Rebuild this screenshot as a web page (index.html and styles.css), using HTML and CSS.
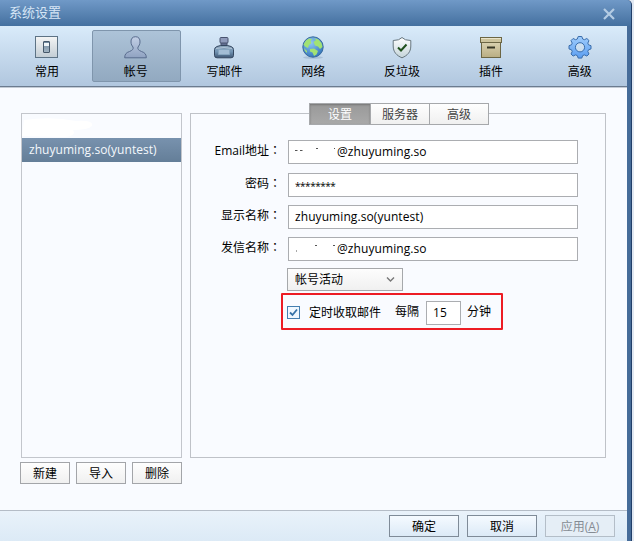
FILE: index.html
```html
<!DOCTYPE html>
<html lang="zh-CN">
<head>
<meta charset="utf-8">
<title>系统设置</title>
<link rel="stylesheet" href="styles.css">
</head>
<body>
<div class="window">
  <header class="titlebar">
    <span>系统设置</span>
    <svg class="close" width="12" height="12" viewBox="0 0 12 12"><path d="M1 1L11 11M11 1L1 11" stroke="#b4cce3" stroke-width="2.200"/></svg>
  </header>
  <div class="inner">
    <nav class="toolbar">
      <div class="tool">
        <svg width="24" height="24" viewBox="0 0 24 24"><defs><linearGradient id="sw" x2="0" y2="1"><stop stop-color="#f4f5f5"/><stop offset="1" stop-color="#c2cdd5"/></linearGradient><linearGradient id="kn" x2="0" y2="1"><stop stop-color="#70899e"/><stop offset="1" stop-color="#a4b6c4"/></linearGradient></defs><rect x=".5" y=".5" width="22" height="21" fill="url(#sw)" stroke="#5d7385"/><rect x="8.500" y="5.500" width="6" height="11" rx=".5" fill="url(#kn)" stroke="#46586a"/><path d="M9 7h5v3h-5z" fill="#eef4f7"/></svg>
        <span>常用</span>
      </div>
      <div class="tool active">
        <svg width="24" height="24" viewBox="0 0 24 24"><defs><linearGradient id="us" x2="0" y2="1"><stop stop-color="#c3d0e6"/><stop offset="1" stop-color="#8fa2c1"/></linearGradient></defs><path d="M11.500 .7C8.300 .7 6.800 3 7 6C7.100 8.500 8 9.700 9 11C9.700 13 8.500 14.300 5.500 15.500C2 16.700 .7 18.300 .7 21.800H22.300C22.300 18.300 21 16.700 17.500 15.500C14.500 14.300 13.300 13 14 11C15 9.700 15.900 8.500 16 6C16.200 3 14.700 .7 11.500 .7Z" fill="url(#us)" stroke="#586b8d"/></svg>
        <span>帐号</span>
      </div>
      <div class="tool">
        <svg width="24" height="24" viewBox="0 0 24 24"><defs><linearGradient id="ink" x2="0" y2="1"><stop stop-color="#8da5bb"/><stop offset=".5" stop-color="#7294b3"/><stop offset="1" stop-color="#3f5774"/></linearGradient></defs><path d="M9 5.500h6v5.500h-6z" fill="#626f91" stroke="#48536f"/><rect x="8" y="1.500" width="8" height="5.500" rx="1" fill="#8f9bbb" stroke="#48536f"/><path d="M2.500 13.500Q2.500 11.500 5 10.500L8.500 9.500H15.500L19 10.500Q21.500 11.500 21.500 13.500V19.500Q21.500 21.800 19 21.800H5Q2.500 21.800 2.500 19.500Z" fill="url(#ink)" stroke="#344760"/><path d="M6.500 13.500h11v5h-11z" fill="#a3bdd5" stroke="#86a5bf"/><path d="M4 12.500Q12 10.500 20 12.500" fill="none" stroke="#b1c5d7"/></svg>
        <span>写邮件</span>
      </div>
      <div class="tool">
        <svg width="24" height="24" viewBox="0 0 24 24"><defs><radialGradient id="gl" cx=".4" cy=".3" r=".75"><stop stop-color="#8fc7f4"/><stop offset="1" stop-color="#2f72b8"/></radialGradient></defs><ellipse cx="12" cy="21.500" rx="10" ry="1.300" fill="#7795b5" opacity=".35"/><circle cx="12" cy="11" r="10.200" fill="url(#gl)" stroke="#386a9d"/><path d="M5 4.500L8 2.500L11 3L9.500 5L10.500 7L8 9L7 12L4 10.500L2.500 8.500ZM13 2L17.500 3.500L20.500 7L21.500 11L19 13L17 10.500L14 9.500L12.500 6L15 4ZM9 13L13 12.500L17 15L15.500 18.500L13 20L11.500 16.500L9 15.500ZM3 12L6 15L6 17L4 15Z" fill="#a2e273"/></svg>
        <span>网络</span>
      </div>
      <div class="tool">
        <svg width="24" height="24" viewBox="0 0 24 24"><defs><linearGradient id="sh" x2="0" y2="1"><stop stop-color="#fff"/><stop offset="1" stop-color="#c4d4d9"/></linearGradient></defs><path d="M12 1.500Q14.500 4.500 20.800 4.500V10C20.800 16 17.500 19.500 12 21.800C6.500 19.500 3.200 16 3.200 10V4.500Q9.500 4.500 12 1.500Z" fill="url(#sh)" stroke="#68777f"/><path d="M8 11.500L11 14.500L16.500 8.500" fill="none" stroke="#20501d" stroke-width="2"/></svg>
        <span>反垃圾</span>
      </div>
      <div class="tool">
        <svg width="24" height="24" viewBox="0 0 24 24"><defs><linearGradient id="bx" x2="0" y2="1"><stop stop-color="#d9d1af"/><stop offset="1" stop-color="#b9ad83"/></linearGradient></defs><rect x="2.500" y="6.500" width="19" height="15" fill="url(#bx)" stroke="#6c6644"/><rect x="1.500" y="1.500" width="21" height="5" fill="#cdc49d" stroke="#6c6644"/><path d="M2 2.500h20" stroke="#e9e4cb"/><path d="M8 11.500h8" stroke="#373725" stroke-width="2"/></svg>
        <span>插件</span>
      </div>
      <div class="tool">
        <svg width="24" height="24" viewBox="0 0 24 24"><defs><linearGradient id="gr" x2="0" y2="1"><stop stop-color="#a0cdfd"/><stop offset="1" stop-color="#5a9df0"/></linearGradient></defs><path fill-rule="evenodd" transform="translate(0 -.7)" d="M10.200 1.200h3.600l.9 2.500l1.700.7l2.500-1.200l2.100 2.100l-1.200 2.500l.7 1.700l2.500.9v3.200l-2.500.9l-.7 1.700l1.200 2.500l-2.100 2.100l-2.500-1.200l-1.700.7l-.9 2.500h-3.600l-.9-2.500l-1.700-.7l-2.500 1.200l-2.100-2.100l1.200-2.500l-.7-1.700l-2.500-.9v-3.200l2.500-.9l.7-1.700l-1.200-2.500l2.100-2.100l2.500 1.200l1.700-.7ZM16.600 12a4.600 4.600 0 1 0-9.200 0a4.600 4.600 0 1 0 9.200 0Z" fill="url(#gr)" stroke="#3a6dab" stroke-linejoin="round"/></svg>
        <span>高级</span>
      </div>
    </nav>
    <main class="content">
      <aside class="sidebar">
        <div class="accounts">
          <div class="account masked"><svg width="72" height="22" viewBox="0 0 72 22"><path d="M2 4Q30 0 54 5Q72 4 70 10Q66 14 51 14Q55 20 42 21L0 20Z" fill="#fff"/></svg></div>
          <div class="account selected">zhuyuming.so(yuntest)</div>
        </div>
        <div class="actions"><button>新建</button><button>导入</button><button>删除</button></div>
      </aside>
      <section class="panel">
        <div class="tabs"><div class="tab current">设置</div><div class="tab">服务器</div><div class="tab">高级</div></div>
        <div class="form">
          <div class="row first"><label>Email地址<i lang="zh-TW">：</i></label><div class="field"><svg class="mask" width="42" height="14" viewBox="0 0 42 14"><path d="M0 5.500h2.500M5 5.500h2.500M21 3.500h2M39 3.500h1" stroke="#555" stroke-width="1"/></svg>@zhuyuming.so</div></div>
          <div class="row"><label>密码<i lang="zh-TW">：</i></label><div class="field stars">********</div></div>
          <div class="row"><label>显示名称<i lang="zh-TW">：</i></label><div class="field">zhuyuming.so(yuntest)</div></div>
          <div class="row"><label>发信名称<i lang="zh-TW">：</i></label><div class="field"><svg class="mask" width="42" height="14" viewBox="0 0 42 14"><path d="M1 9h1M20 3.500h2M38 3.500h2" stroke="#555" stroke-width="1"/></svg>@zhuyuming.so</div></div>
        </div>
        <div class="select"><span>帐号活动</span><svg width="9" height="7" viewBox="0 0 9 7"><path d="M1 1.500L4.500 5L8 1.500" fill="none" stroke="#777" stroke-width="1.400"/></svg></div>
        <div class="timer">
          <svg class="check" width="13" height="13" viewBox="0 0 13 13"><rect x=".5" y=".5" width="12" height="12" fill="#f0f8ff" stroke="#457fb0"/><path d="M3 6.500L5.500 9L10 3.500" fill="none" stroke="#3672a8" stroke-width="1.800"/></svg>
          <span class="what">定时收取邮件</span><span class="every">每隔</span><div class="minutes">15</div><span class="unit">分钟</span>
        </div>
      </section>
    </main>
    <footer class="footer"><button>确定</button><button>取消</button><button class="disabled">应用(<u>A</u>)</button></footer>
  </div>
</div>
</body>
</html>
```
FILE: styles.css
```css
* { box-sizing: border-box; }
body {
  margin: 0;
  height: 541px;
  overflow: hidden;
  background: #e1e8f2;
  color: #000;
  font: 12px/18px "Open Sans", "Noto Sans CJK SC", sans-serif;
}
svg { display: block; flex: none; }
button {
  padding: 0;
  font: inherit;
  color: #000;
  height: 22px;
  line-height: 21px;
  border: 1px solid #a3a5a9;
  background: linear-gradient(#fefefe, #f0f0f0);
}
.window {
  width: 632px;
  height: 541px;
  display: flex;
  flex-direction: column;
  background: #466c99;
  border-right: 1px solid #213f69;
  border-top-right-radius: 5px;
  overflow: hidden;
}
.titlebar {
  height: 26px;
  flex: none;
  display: flex;
  align-items: center;
  justify-content: space-between;
  padding: 0 16px 0 9px;
  background: linear-gradient(#7099c7, #44709f);
  color: #d6e5f5;
  font-size: 13px;
}
.titlebar span { margin-top: -2px; }
.close { margin-top: 1px; }
.inner {
  width: 627px;
  height: 515px;
  display: flex;
  flex-direction: column;
  background: #f9fbff;
}
.toolbar {
  height: 62px;
  flex: none;
  display: flex;
  padding: 4px 0 0 3px;
  border-bottom: 1px solid #c3cbd5;
  box-shadow: inset 0 -1px #6b7b8f;
  background: linear-gradient(#d9ebfa, #b0c6de);
}
.tool {
  width: 88.8px;
  height: 52px;
  display: flex;
  flex-direction: column;
  align-items: center;
  padding: 5px 1px 0 0;
  border: 1px solid transparent;
  border-radius: 2px;
}
.tool span { margin-top: 3px; }
.active {
  border-color: #7f95ac;
  background: linear-gradient(#adc3d8, #92a9c0);
}
.content {
  height: 422px;
  flex: none;
  display: flex;
  align-items: flex-start;
  padding: 25px 0 0 20px;
}
.sidebar { width: 162px; margin-right: 8px; }
.accounts {
  height: 345px;
  margin-left: 1px;
  border: 1px solid #c3c6cc;
}
.account { height: 24px; line-height: 23px; }
.masked { padding-top: 2px; }
.selected {
  padding-left: 7px;
  color: #f4f8fc;
  background: linear-gradient(#7892ae, #647e98);
  letter-spacing: .05px;
}
.actions { display: flex; gap: 6px; margin-top: 4px; }
.actions button { width: 50px; }
.panel {
  width: 416px;
  height: 345px;
  border: 1px solid #bfc2c8;
}
.tabs {
  display: flex;
  width: 180px;
  height: 22px;
  margin: -11px 0 0 118px;
  border: 1px solid #a6a8ab;
  background: linear-gradient(#fefefe, #f0f0f0);
  color: #444;
  line-height: 21px;
  text-align: center;
}
.tab { width: 59px; }
.tab + .tab { border-left: 1px solid #a6a8ab; }
.tab.current { width: 60px; color: #fff; background: linear-gradient(#999, #a9a9a9); box-shadow: inset 0 1px 2px #777; }
.form { display: flex; flex-direction: column; gap: 8px; margin-top: 15px; }
.row { display: flex; height: 24px; }
.first { margin-bottom: 1px; }
.row label { width: 90px; margin-right: 7px; line-height: 20px; text-align: right; white-space: nowrap; }
.row i { font-family: "Noto Sans CJK TC", sans-serif; font-style: normal; }
.field {
  width: 290px;
  height: 24px;
  display: flex;
  align-items: center;
  padding-left: 6px;
  border: 1px solid #abadb1;
  background: #fff;
  letter-spacing: .08px;
}
.stars { padding-top: 2px; font-size: 10px; letter-spacing: -.46px; }
.select {
  width: 116px;
  height: 23px;
  display: flex;
  align-items: center;
  justify-content: space-between;
  margin: 7px 0 0 96px;
  padding: 0 7px;
  border: 1px solid #a6a8ab;
  background: linear-gradient(#fdfdfd, #f0f0f0);
}
.timer {
  width: 222px;
  height: 37px;
  display: flex;
  align-items: center;
  margin: 2px 0 0 90px;
  padding-left: 4px;
  border: 2px solid #ed1c24;
  border-radius: 1px;
}
.check { margin-top: 2px; }
.what { margin: 2px 0 0 9px; }
.every { margin-left: 14px; }
.minutes {
  width: 35px;
  height: 24px;
  margin: 2px 6px 0 7px;
  padding-left: 6px;
  line-height: 22px;
  border: 1px solid #abadb1;
  background: #fff;
}
.footer {
  flex: 1;
  display: flex;
  justify-content: flex-end;
  gap: 8px;
  padding: 4px 12px 0 0;
  border-top: 1px solid #b4bcc6;
  background: linear-gradient(#e9f2fa, #dceaf6);
}
.footer button { width: 70px; border-color: #7f8b98; background: linear-gradient(#f5faff, #dceaf7); }
.footer .disabled { color: #858c94; border-color: #b4bec8; background: #e5eef6; }
```
